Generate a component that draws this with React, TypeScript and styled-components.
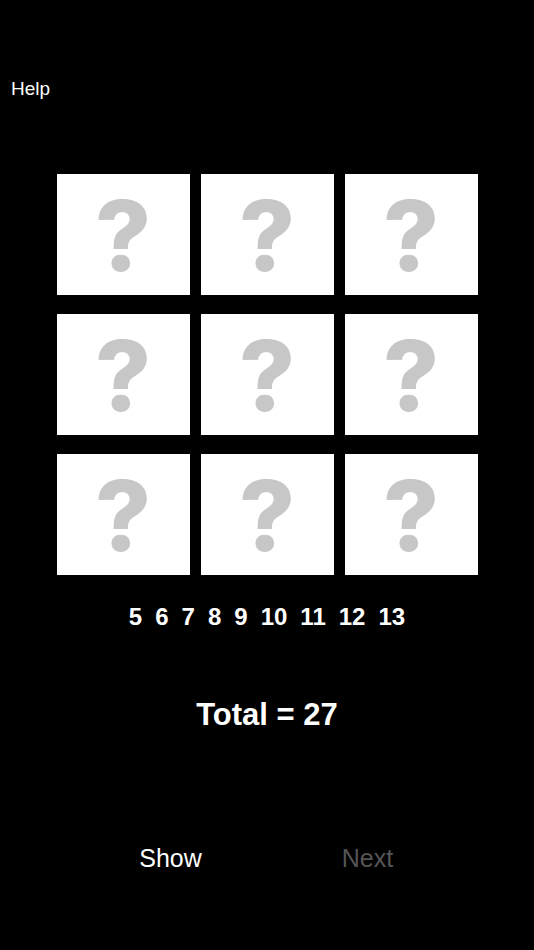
import React from "react";
import styled, { createGlobalStyle } from "styled-components";

const GlobalStyle = createGlobalStyle`
    html, body {
        margin: 0;
        padding: 0;
        background: #000;
    }
    body {
        font-family: "Liberation Sans", Arial, sans-serif;
        color: #fff;
    }
`

const Screen = styled.div`
    width: 534px;
    min-height: 950px;
    background: #000;
    display: flex;
    flex-direction: column;
`

const Header = styled.div`
    padding: 78px 0 0 11px;
    height: 22px;
`

const HelpLink = styled.span`
    font-size: 19px;
    line-height: 22px;
    color: #fff;
    cursor: pointer;
`

const Board = styled.div`
    margin: 74px auto 0;
    display: grid;
    grid-template-columns: repeat(3, 133px);
    grid-auto-rows: 121px;
    column-gap: 11px;
    row-gap: 19px;
`

const Tile = styled.div`
    background: #fff;
    display: flex;
    align-items: center;
    justify-content: center;
`

const Mark = styled.span`
    font-family: Inter, "Liberation Sans", sans-serif;
    font-size: 97px;
    line-height: 1;
    font-weight: 800;
    color: #c7c7c7;
    padding-top: 2px;
`

const Numbers = styled.div`
    margin-top: 28px;
    display: flex;
    justify-content: center;
    gap: 13px;
    font-size: 24px;
    line-height: 28px;
    font-weight: 700;
`

const Total = styled.div`
    margin-top: 66px;
    text-align: center;
    font-size: 31px;
    line-height: 36px;
    font-weight: 700;
`

const Actions = styled.div`
    margin-top: 110px;
    display: flex;
    justify-content: center;
    padding-left: 4px;
`

const ActionButton = styled.button<{ $disabled?: boolean }>`
    width: 197px;
    background: transparent;
    border: none;
    padding: 0;
    font-family: inherit;
    font-size: 25px;
    line-height: 30px;
    color: ${p => (p.$disabled ? "#555555" : "#fff")};
    cursor: ${p => (p.$disabled ? "default" : "pointer")};
`

const numbers = [5, 6, 7, 8, 9, 10, 11, 12, 13];

export default function App() {
    return (
        <>
            <GlobalStyle />
            <Screen>
                <Header>
                    <HelpLink>Help</HelpLink>
                </Header>
                <Board>
                    {Array.from({ length: 9 }).map((_, i) => (
                        <Tile key={i}>
                            <Mark>?</Mark>
                        </Tile>
                    ))}
                </Board>
                <Numbers>
                    {numbers.map(n => <span key={n}>{n}</span>)}
                </Numbers>
                <Total>Total = 27</Total>
                <Actions>
                    <ActionButton>Show</ActionButton>
                    <ActionButton $disabled>Next</ActionButton>
                </Actions>
            </Screen>
        </>
    );
}
